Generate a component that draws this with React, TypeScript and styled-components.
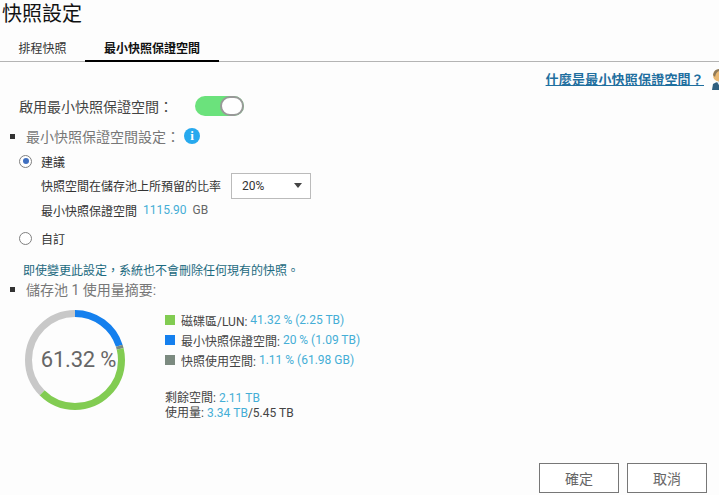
import React from 'react';
import styled, { createGlobalStyle } from 'styled-components';

const GlobalStyle = createGlobalStyle`
  html, body {
    margin: 0;
    padding: 0;
    background: #fdfdfd;
    overflow: hidden;
  }
  * {
    box-sizing: border-box;
  }
`;

const Page = styled.div`
  width: 719px;
  height: 495px;
  display: flex;
  flex-direction: column;
  font-family: Roboto, "Noto Sans CJK TC", sans-serif;
  font-size: 12px;
  color: #333;
  background: #fdfdfd;
  overflow: hidden;
`;

const Title = styled.h1`
  margin: 0;
  padding: 0 0 0 2px;
  height: 29px;
  font-size: 20px;
  line-height: 29px;
  font-weight: 400;
  color: #111;
`;

const TabBar = styled.div`
  display: flex;
  height: 33px;
  padding-top: 11px;
  border-bottom: 1px solid #b4b4b4;
`;

const Tab = styled.div<{ $active?: boolean; $width: number }>`
  width: ${(p) => p.$width}px;
  height: 22px;
  line-height: 18px;
  text-align: center;
  font-size: 12px;
  font-weight: ${(p) => (p.$active ? 700 : 400)};
  color: ${(p) => (p.$active ? '#111' : '#333')};
  border-bottom: ${(p) => (p.$active ? '2px solid #000' : 'none')};
`;

const HelpRow = styled.div`
  display: flex;
  justify-content: flex-end;
  align-items: center;
  gap: 7px;
  height: 29px;
  margin-right: -4px;
  padding-top: 4px;
`;

const HelpLink = styled.a`
  font-size: 13px;
  font-weight: 700;
  letter-spacing: 0.2px;
  color: #1f6f9f;
  text-decoration: underline;
`;

const EnableRow = styled.div`
  display: flex;
  align-items: center;
  height: 30px;
  padding-left: 19px;
  font-size: 14px;
  color: #444;
`;

const Toggle = styled.div`
  position: relative;
  width: 49px;
  height: 20px;
  margin-left: 22px;
  border-radius: 10px;
  background: #6be27c;
`;

const Knob = styled.div`
  position: absolute;
  top: 0;
  right: 0;
  width: 24px;
  height: 20px;
  border-radius: 10px;
  background: #fff;
  border: 2px solid #999;
`;

const SectionRow = styled.div<{ $height: number }>`
  display: flex;
  align-items: center;
  height: ${(p) => p.$height}px;
  padding-left: 10px;
  font-size: 14px;
  color: #777;
`;

const Bullet = styled.span`
  width: 5px;
  height: 5px;
  margin-right: 11px;
  background: #333;
`;

const InfoBadge = styled.span`
  width: 16px;
  height: 16px;
  margin-left: 4px;
  border-radius: 50%;
  background: #27a9ee;
  color: #fff;
  font: 700 13px/16px "Liberation Serif", serif;
  text-align: center;
`;

const RadioRow = styled.label<{ $top: number }>`
  display: flex;
  align-items: center;
  height: 20px;
  margin-top: ${(p) => p.$top}px;
  padding-left: 19px;
  color: #333;
`;

const Radio = styled.span<{ $checked?: boolean }>`
  display: flex;
  align-items: center;
  justify-content: center;
  width: 13px;
  height: 13px;
  margin-right: 9px;
  border-radius: 50%;
  border: 1px solid #808080;
  background: #fff;
  &::after {
    content: '';
    display: ${(p) => (p.$checked ? 'block' : 'none')};
    width: 6px;
    height: 6px;
    border-radius: 50%;
    background: #3f6fc0;
  }
`;

const SubRow = styled.div<{ $height: number }>`
  display: flex;
  align-items: center;
  height: ${(p) => p.$height}px;
  padding-left: 41px;
  color: #333;
`;

const Select = styled.div`
  display: flex;
  align-items: center;
  justify-content: space-between;
  width: 80px;
  height: 26px;
  margin-left: 10px;
  padding: 0 8px 0 10px;
  border: 1px solid #bbb;
  background: #fff;
`;

const Caret = styled.span`
  width: 0;
  height: 0;
  border-left: 4px solid transparent;
  border-right: 4px solid transparent;
  border-top: 5px solid #444;
`;

const Value = styled.span`
  color: #45aed6;
`;

const Unit = styled.span`
  margin-left: 6px;
  color: #666;
`;

const Note = styled.div`
  height: 19px;
  margin-top: 13px;
  padding-left: 23px;
  line-height: 20px;
  color: #1c6a80;
`;

const Summary = styled.div`
  display: flex;
  align-items: flex-start;
  margin-top: 12px;
  padding-left: 25px;
`;

const DonutBox = styled.div`
  position: relative;
  width: 100px;
  height: 100px;
`;

const DonutLabel = styled.div`
  position: absolute;
  inset: 0;
  display: flex;
  align-items: center;
  justify-content: center;
  padding: 0 0 2px 7px;
  font-size: 22px;
  letter-spacing: -0.2px;
  color: #666;
  white-space: nowrap;
`;

const Legend = styled.div`
  margin-left: 40px;
`;

const LegendRow = styled.div`
  display: flex;
  align-items: center;
  height: 20px;
  color: #444;
`;

const Swatch = styled.span<{ $color: string }>`
  width: 10px;
  height: 10px;
  margin-right: 6px;
  background: ${(p) => p.$color};
`;

const Totals = styled.div`
  margin-top: 21px;
  line-height: 15px;
  color: #444;
`;

const Footer = styled.div`
  display: flex;
  justify-content: flex-end;
  gap: 8px;
  margin-top: auto;
  padding: 0 12px 2px 0;
`;

const Button = styled.button`
  width: 80px;
  height: 30px;
  border: 1px solid #777;
  background: #fff;
  color: #666;
  font-family: inherit;
  font-size: 14px;
`;

const segments = [
  { color: '#1580ee', from: 0, to: 20 },
  { color: '#7b8a80', from: 20, to: 21.11 },
  { color: '#82cc52', from: 21.11, to: 62.43 },
  { color: '#c8c8c8', from: 62.43, to: 100 },
];

const Donut: React.FC = () => {
  const r = 46.5;
  const circumference = 2 * Math.PI * r;
  return (
    <svg width="100" height="100" viewBox="0 0 100 100">
      <g transform="rotate(-90 50 50)" fill="none" strokeWidth="7">
        {segments.map((s) => (
          <circle
            key={s.color}
            cx="50"
            cy="50"
            r={r}
            stroke={s.color}
            strokeDasharray={`${((s.to - s.from) / 100) * circumference} ${circumference}`}
            strokeDashoffset={-(s.from / 100) * circumference}
          />
        ))}
      </g>
    </svg>
  );
};

const Avatar: React.FC = () => (
  <svg width="12" height="24" viewBox="0 0 12 24">
    <circle cx="8" cy="8.5" r="6" fill="#e9b872" />
    <path d="M2 8 Q3 2 8 2 Q12 2 12 4 L8 4 Q5 5 4 10 Z" fill="#8f7a58" />
    <path d="M1 23 L2 17 Q6 14 12 15 L12 23 Z" fill="#2f5f7f" />
    <path d="M6 15 L9 20 L12 15 Z" fill="#e8eef2" />
  </svg>
);

const App: React.FC = () => (
  <Page>
    <GlobalStyle />
    <Title>快照設定</Title>
    <TabBar>
      <Tab $width={85}>排程快照</Tab>
      <Tab $width={134} $active>最小快照保證空間</Tab>
    </TabBar>
    <HelpRow>
      <HelpLink href="#">什麼是最小快照保證空間？</HelpLink>
      <Avatar />
    </HelpRow>
    <EnableRow>
      啟用最小快照保證空間：
      <Toggle>
        <Knob />
      </Toggle>
    </EnableRow>
    <SectionRow $height={30}>
      <Bullet />
      最小快照保證空間設定：
      <InfoBadge>i</InfoBadge>
    </SectionRow>
    <RadioRow $top={0}>
      <Radio $checked />
      建議
    </RadioRow>
    <SubRow $height={29}>
      快照空間在儲存池上所預留的比率
      <Select>
        20%
        <Caret />
      </Select>
    </SubRow>
    <SubRow $height={20}>
      最小快照保證空間&nbsp;&nbsp;<Value>1115.90</Value>
      <Unit>GB</Unit>
    </SubRow>
    <RadioRow $top={8}>
      <Radio />
      自訂
    </RadioRow>
    <Note>即使變更此設定，系統也不會刪除任何現有的快照。</Note>
    <SectionRow $height={18}>
      <Bullet />
      儲存池 1 使用量摘要:
    </SectionRow>
    <Summary>
      <DonutBox>
        <Donut />
        <DonutLabel>61.32 %</DonutLabel>
      </DonutBox>
      <Legend>
        <LegendRow>
          <Swatch $color="#82cc52" />
          磁碟區/LUN:&nbsp;<Value>41.32 % (2.25 TB)</Value>
        </LegendRow>
        <LegendRow>
          <Swatch $color="#1580ee" />
          最小快照保證空間:&nbsp;<Value>20 % (1.09 TB)</Value>
        </LegendRow>
        <LegendRow>
          <Swatch $color="#7b8a80" />
          快照使用空間:&nbsp;<Value>1.11 % (61.98 GB)</Value>
        </LegendRow>
        <Totals>
          <div>
            剩餘空間:&nbsp;<Value>2.11 TB</Value>
          </div>
          <div>
            使用量:&nbsp;<Value>3.34 TB</Value>/5.45 TB
          </div>
        </Totals>
      </Legend>
    </Summary>
    <Footer>
      <Button>確定</Button>
      <Button>取消</Button>
    </Footer>
  </Page>
);

export default App;
